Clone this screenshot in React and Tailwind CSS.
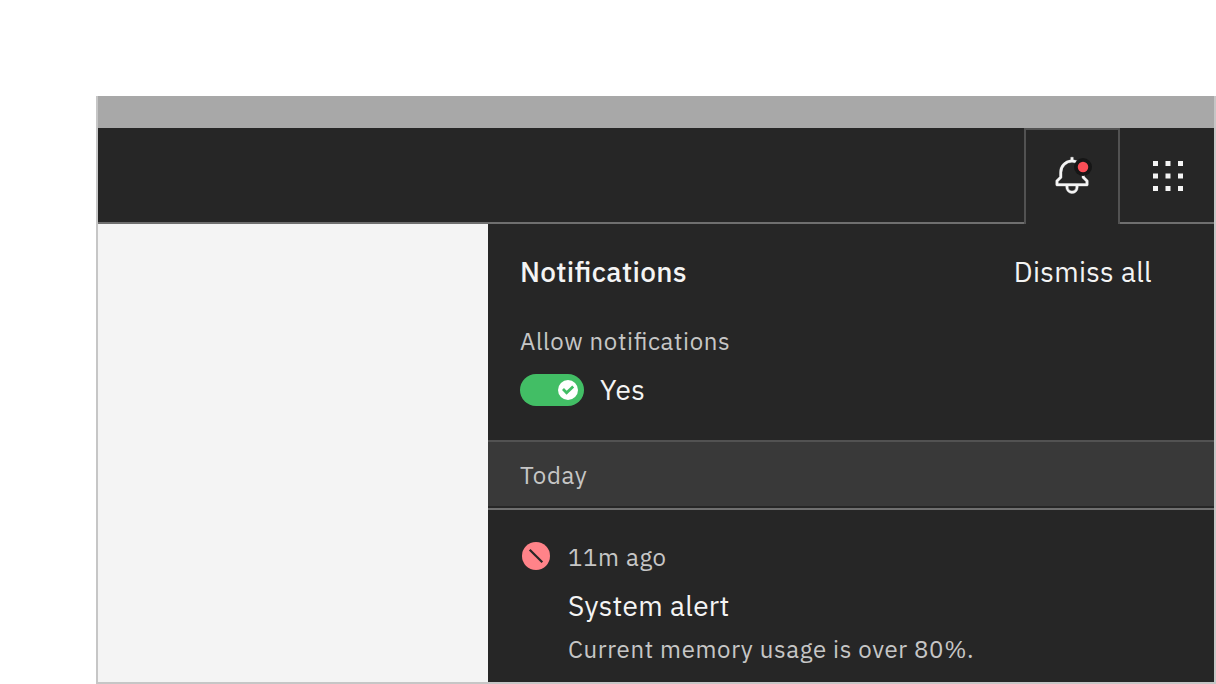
const BellIcon = () => (
  <svg viewBox="0 0 32 32" className="size-10 overflow-visible">
    <path
      fill="#f4f4f4"
      stroke="#f4f4f4"
      strokeWidth="0.3"
      strokeLinejoin="round"
      d="M28.7071,19.293,26,16.5859V13a10.0136,10.0136,0,0,0-9-9.9492V1H15V3.0508A10.0136,10.0136,0,0,0,6,13v3.5859L3.2929,19.293A1,1,0,0,0,3,20v3a1,1,0,0,0,1,1h7v.7768a5.152,5.152,0,0,0,4.5,5.1987A5.0057,5.0057,0,0,0,21,25V24h7a1,1,0,0,0,1-1V20A1,1,0,0,0,28.7071,19.293ZM19,25a3,3,0,0,1-6,0V24h6Zm8-3H5V20.4141L7.707,17.707A1,1,0,0,0,8,17V13a8,8,0,0,1,16,0v4a1,1,0,0,0,.293.707L27,20.4141Z"
    />
    <circle cx="24.8" cy="8.8" r="7.2" fill="#161616" />
    <circle cx="24.8" cy="8.8" r="4.2" fill="#fa4d56" />
  </svg>
);

const steps = [4, 14, 24];

const SwitcherIcon = () => (
  <svg viewBox="0 0 32 32" className="size-10" fill="#f4f4f4">
    {steps.map((y) => steps.map((x) => <rect key={`${x}-${y}`} x={x} y={y} width="4" height="4" />))}
  </svg>
);

const ErrorIcon = () => (
  <svg viewBox="0 0 32 32" className="size-8 shrink-0">
    <circle cx="16" cy="16" r="14" fill="#ff8389" />
    <path d="M9.7 9.7 22.3 22.3" stroke="#262626" strokeWidth="2.2" />
  </svg>
);

const Toggle = () => (
  <span className="flex h-8 w-16 items-center justify-end rounded-full bg-[#42be65] pr-1.5">
    <svg viewBox="0 0 20 20" className="size-5">
      <circle cx="10" cy="10" r="10" fill="#fff" />
      <path d="M5 9.1 8.6 12.7 15.2 6.5" fill="none" stroke="#42be65" strokeWidth="2.8" />
    </svg>
  </span>
);

export default function App() {
  return (
    <div className="h-[684px] w-[1216px] overflow-hidden bg-white pt-24 pl-24 font-['IBM_Plex_Sans',Roboto,sans-serif] whitespace-nowrap antialiased [font-feature-settings:'liga'_1]">
      <div className="flex h-[588px] flex-col border-x-2 border-b-2 border-[#c6c6c6]">
        <div className="h-8 shrink-0 bg-[#a8a8a8]" />
        <header className="flex h-24 shrink-0 bg-[#262626]">
          <div className="flex-1 border-b-2 border-[#6f6f6f]" />
          <button className="flex w-24 items-center justify-center border-x-2 border-t-2 border-[#525252] pb-0.5">
            <BellIcon />
          </button>
          <button className="flex w-[94px] items-center justify-center border-b-2 border-[#6f6f6f] pt-0.5 pl-0.5">
            <SwitcherIcon />
          </button>
        </header>
        <main className="flex min-h-0 flex-1">
          <div className="flex-1 bg-[#f4f4f4]" />
          <aside className="flex w-[726px] flex-col bg-[#262626] text-[#f4f4f4]">
            <section className="h-[216px] shrink-0 pt-[30px] pr-[62px] pl-8">
              <div className="flex h-9 items-center justify-between text-[28px] leading-9">
                <h2 className="font-medium tracking-[0.32px]">Notifications</h2>
                <button className="tracking-[0.32px]">Dismiss all</button>
              </div>
              <p className="mt-[35px] h-8 text-2xl leading-8 tracking-[0.64px] text-[#c6c6c6]">Allow notifications</p>
              <div className="mt-[17px] flex h-8 items-center gap-4">
                <Toggle />
                <span className="text-[28px] leading-8 tracking-[0.32px]">Yes</span>
              </div>
            </section>
            <div className="h-[68px] shrink-0 border-t-2 border-b-2 border-t-[#525252] border-b-[#262626] bg-[#393939] pt-[17px] pl-8 text-2xl leading-8 tracking-[0.64px] text-[#c6c6c6]">
              Today
            </div>
            <section className="flex flex-1 gap-4 border-t-2 border-[#6f6f6f] pt-[30px] pl-8">
              <ErrorIcon />
              <div>
                <p className="mt-px text-2xl leading-8 tracking-[0.64px] text-[#c6c6c6]">11m ago</p>
                <h3 className="mt-[15px] text-[28px] leading-9 tracking-[0.32px]">System alert</h3>
                <p className="mt-[9px] text-2xl leading-8 tracking-[0.64px] text-[#c6c6c6]">Current memory usage is over 80%.</p>
              </div>
            </section>
          </aside>
        </main>
      </div>
    </div>
  );
}
